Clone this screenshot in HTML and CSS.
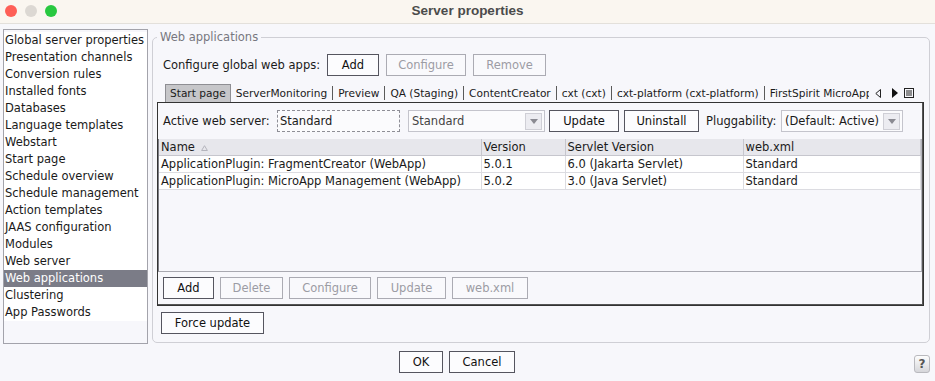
FILE: index.html
```html
<!DOCTYPE html>
<html lang="en">
<head>
  <meta charset="UTF-8" />
  <meta name="viewport" content="width=device-width, initial-scale=1.0"/>
  <title>Server properties</title>
  <link rel="stylesheet" href="styles.css">
</head>
<body>

  <div class="window">
    <div class="titlebar">
      <div class="lights">
        <span class="light red"></span>
        <span class="light idle"></span>
        <span class="light green"></span>
      </div>
      <div class="title">Server properties</div>
      <div></div>
    </div>

    <div class="content">
      <ul class="nav">
        <li>Global server properties</li>
        <li>Presentation channels</li>
        <li>Conversion rules</li>
        <li>Installed fonts</li>
        <li>Databases</li>
        <li>Language templates</li>
        <li>Webstart</li>
        <li>Start page</li>
        <li>Schedule overview</li>
        <li>Schedule management</li>
        <li>Action templates</li>
        <li>JAAS configuration</li>
        <li>Modules</li>
        <li>Web server</li>
        <li class="selected">Web applications</li>
        <li>Clustering</li>
        <li>App Passwords</li>
      </ul>

      <fieldset class="group">
        <legend>Web applications</legend>

        <div class="global-row">
          <span class="global-label">Configure global web apps:</span>
          <button class="btn btn-add">Add</button>
          <button class="btn btn-configure" disabled>Configure</button>
          <button class="btn btn-remove" disabled>Remove</button>
        </div>

        <div class="tabbar">
          <div class="tabs">
            <span class="tab active">Start page</span>
            <span class="tab">ServerMonitoring</span>
            <span class="tab">Preview</span>
            <span class="tab">QA (Staging)</span>
            <span class="tab">ContentCreator</span>
            <span class="tab">cxt (cxt)</span>
            <span class="tab">cxt-platform (cxt-platform)</span>
            <span class="tab last">FirstSpirit MicroApp Management</span>
          </div>
          <div class="tab-controls">
            <svg width="6" height="9" viewBox="0 0 6 9"><polygon points="5.5,0.5 5.5,8.5 0.8,4.5" fill="none" stroke="#222" stroke-width="1"/></svg>
            <svg width="6" height="10" viewBox="0 0 6 10"><polygon points="0,0 6,5 0,10" fill="#111"/></svg>
            <svg width="10" height="10" viewBox="0 0 10 10"><rect x="0.5" y="0.5" width="9" height="9" fill="none" stroke="#222"/><line x1="2" y1="3" x2="8" y2="3" stroke="#222"/><line x1="2" y1="5" x2="8" y2="5" stroke="#222"/><line x1="2" y1="7" x2="8" y2="7" stroke="#222"/></svg>
          </div>
        </div>

        <div class="tab-panel">
          <div class="server-row">
            <span class="server-label">Active web server:</span>
            <div class="text-field">Standard</div>
            <div class="combo combo-server disabled">
              <span class="combo-text">Standard</span>
              <span class="combo-arrow"><svg width="8" height="5" viewBox="0 0 8 5"><polygon points="0,0 8,0 4,5" fill="#8a8a92"/></svg></span>
            </div>
            <button class="btn btn-update">Update</button>
            <button class="btn btn-uninstall">Uninstall</button>
            <span class="plug-label">Pluggability:</span>
            <div class="combo combo-plug">
              <span class="combo-text">(Default: Active)</span>
              <span class="combo-arrow"><svg width="8" height="5" viewBox="0 0 8 5"><polygon points="0,0 8,0 4,5" fill="#8a8a92"/></svg></span>
            </div>
          </div>

          <div class="table-wrap">
            <table class="apps">
              <colgroup>
                <col class="col-name">
                <col class="col-version">
                <col class="col-servlet">
                <col>
              </colgroup>
              <thead>
                <tr>
                  <th>Name <svg class="sort" width="7" height="6" viewBox="0 0 7 6"><polygon points="3.5,0.7 6.4,5.5 0.6,5.5" fill="none" stroke="#b4b4bc" stroke-width="1"/></svg></th>
                  <th>Version</th>
                  <th>Servlet Version</th>
                  <th>web.xml</th>
                </tr>
              </thead>
              <tbody>
                <tr>
                  <td>ApplicationPlugin: FragmentCreator (WebApp)</td>
                  <td>5.0.1</td>
                  <td>6.0 (Jakarta Servlet)</td>
                  <td>Standard</td>
                </tr>
                <tr>
                  <td>ApplicationPlugin: MicroApp Management (WebApp)</td>
                  <td>5.0.2</td>
                  <td>3.0 (Java Servlet)</td>
                  <td>Standard</td>
                </tr>
              </tbody>
            </table>
          </div>

          <div class="table-actions">
            <button class="btn btn-add">Add</button>
            <button class="btn btn-delete" disabled>Delete</button>
            <button class="btn btn-tconfigure" disabled>Configure</button>
            <button class="btn btn-tupdate" disabled>Update</button>
            <button class="btn btn-webxml" disabled>web.xml</button>
          </div>
        </div>

        <button class="btn btn-force">Force update</button>
      </fieldset>
    </div>

    <div class="footer">
      <button class="btn btn-ok">OK</button>
      <button class="btn btn-cancel">Cancel</button>
      <button class="help">?</button>
    </div>
  </div>

</body>
</html>
```

FILE: styles.css
```css
body {
  margin: 0;
  background: #f7f7fb;
  font-family: 'DejaVu Sans', sans-serif;
  font-size: 11.5px;
  color: #1a1a1a;
}

.window {
  width: 935px;
  height: 381px;
  overflow: hidden;
}

/* title bar */

.titlebar {
  box-sizing: border-box;
  height: 24px;
  padding-bottom: 1px;
  background: #faf6f0;
  border-bottom: 1px solid #e3e0db;
  display: grid;
  grid-template-columns: 1fr auto 1fr;
  align-items: center;
}

.lights {
  display: flex;
  gap: 8px;
  padding-left: 5px;
}

.light {
  width: 12px;
  height: 12px;
  border-radius: 50%;
}

.red { background: #fe5f57; }
.idle { background: #dcd8d3; }
.green { background: #28c840; }

.title {
  font-family: 'Liberation Sans', sans-serif;
  font-weight: bold;
  font-size: 13.5px;
  color: #4b4b4b;
  padding-bottom: 1px;
}

/* main area */

.content {
  display: flex;
  align-items: flex-start;
  gap: 4px;
  padding: 5px 5px 0 3px;
}

.nav {
  margin: 0;
  padding: 2px 0 0;
  list-style: none;
  width: 143px;
  height: 311px;
  border: 1px solid #a3a3ab;
  background: #f7f7fb;
}

.nav li {
  height: 17px;
  line-height: 17px;
  padding-left: 1px;
  background: #fff;
  white-space: nowrap;
  overflow: hidden;
}

.nav .selected {
  background: #7b7c87;
  color: #fff;
}

.group {
  flex: 1;
  min-width: 0;
  margin: 1px 0 0;
  border: 1px solid #cfcfd5;
  border-radius: 5px;
  padding: 0 5px 8px 4px;
}

.group legend {
  padding: 0 3px;
  line-height: 15px;
  color: #77777f;
}

/* buttons */

.btn {
  font-family: inherit;
  font-size: 11.5px;
  height: 22px;
  padding: 0;
  background: #fcfcfe;
  color: #111;
  border: 1px solid #55555f;
  border-radius: 0;
}

.btn:disabled {
  color: #9c9ca4;
  border-color: #ababb3;
  background: #f9f9fc;
}

.global-row {
  display: flex;
  align-items: center;
  gap: 7px;
  margin-top: 9px;
  padding-left: 6px;
}

.global-label { width: 157px; white-space: nowrap; }
.global-row .btn-add { width: 52px; }
.btn-configure { width: 80px; }
.btn-remove { width: 73px; }

/* tabs */

.tabbar {
  display: flex;
  height: 18px;
  margin-top: 8px;
  padding-left: 8px;
}

.tabs {
  flex: 1;
  min-width: 0;
  display: flex;
  align-items: center;
  overflow: hidden;
}

.tab {
  font-size: 10.6px;
  line-height: 14px;
  padding: 0 5px;
  border-right: 1px solid #5a5a5a;
  white-space: nowrap;
}

.tab.last { border-right: none; }

.tab.active {
  align-self: stretch;
  line-height: 17px;
  padding: 0 4px;
  background: #c6c6c9;
  border: 1px solid #8e8e93;
  border-bottom: none;
}

.tab-controls {
  width: 49px;
  flex: none;
  display: flex;
  align-items: center;
  padding-left: 6px;
}

.tab-controls svg:nth-child(2) { margin-left: 11px; }
.tab-controls svg:nth-child(3) { margin-left: 6px; }

.tab-panel {
  box-sizing: border-box;
  height: 204px;
  border: 1px solid #333;
  box-shadow: inset -1px -1px 0 #555;
}

.server-row {
  display: flex;
  align-items: center;
  height: 22px;
  margin: 7px 0 0 5px;
}

.server-label { width: 114px; white-space: nowrap; }

.text-field {
  box-sizing: border-box;
  width: 123px;
  height: 22px;
  line-height: 20px;
  padding-left: 2px;
  border: 1px dashed #8e8e96;
  background: #fbfbfd;
  margin-right: 8px;
}

.combo {
  box-sizing: border-box;
  height: 22px;
  display: flex;
  align-items: center;
  border: 1px solid #c4c4cc;
  background: #fbfbfd;
  padding: 0 2px 0 3px;
}

.combo-text { flex: 1; white-space: nowrap; }
.combo.disabled .combo-text { color: #444; }

.combo-arrow {
  width: 17px;
  height: 17px;
  box-sizing: border-box;
  border: 1px solid #cfcfd6;
  background: #ececf1;
  display: flex;
  align-items: center;
  justify-content: center;
}

.combo-server { width: 137px; margin-right: 4px; }
.btn-update { width: 70px; margin-right: 5px; }
.btn-uninstall { width: 75px; margin-right: 7px; }
.plug-label { width: 75px; white-space: nowrap; }
.combo-plug { width: 122px; }

/* table */

.table-wrap {
  box-sizing: border-box;
  height: 133px;
  margin: 7px 1px 0 0;
  border-left: 1px solid #7d7d85;
  border-right: 1px solid #b4b4bc;
  border-bottom: 1px solid #a8a8b0;
}

.apps {
  width: 100%;
  border-collapse: collapse;
  table-layout: fixed;
}

.col-name { width: 322px; }
.col-version { width: 84px; }
.col-servlet { width: 178px; }

.apps th,
.apps td {
  height: 16px;
  line-height: 16px;
  padding: 0 2px;
  text-align: left;
  font-weight: normal;
  white-space: nowrap;
  overflow: hidden;
}

.apps th {
  background: #e7e7ec;
  border-right: 1px solid #c6c6cd;
  border-bottom: 1px solid #c6c6cd;
}

.apps td {
  background: #fff;
  border-right: 1px solid #dcdce1;
  border-bottom: 1px solid #dcdce1;
}

.sort { margin-left: 2px; }

.table-actions {
  display: flex;
  gap: 6px;
  margin-top: 5px;
  padding-left: 5px;
}

.table-actions .btn-add { width: 51px; }
.btn-delete { width: 63px; }
.btn-tconfigure { width: 82px; }
.btn-tupdate { width: 69px; }
.btn-webxml { width: 76px; }

.btn-force {
  width: 103px;
  margin: 6px 0 0 4px;
}

/* footer */

.footer {
  display: flex;
  gap: 6px;
  padding: 7px 5px 0 399px;
}

.btn-ok { width: 44px; }
.btn-cancel { width: 66px; }

.help {
  margin-left: auto;
  align-self: flex-end;
  width: 16px;
  height: 18px;
  padding: 0;
  font-family: 'DejaVu Sans', sans-serif;
  font-size: 12px;
  font-weight: bold;
  color: #555;
  background: linear-gradient(#fdfdfd, #d6d6da);
  border: 1px solid #b9b9be;
  border-radius: 3px;
}
```
